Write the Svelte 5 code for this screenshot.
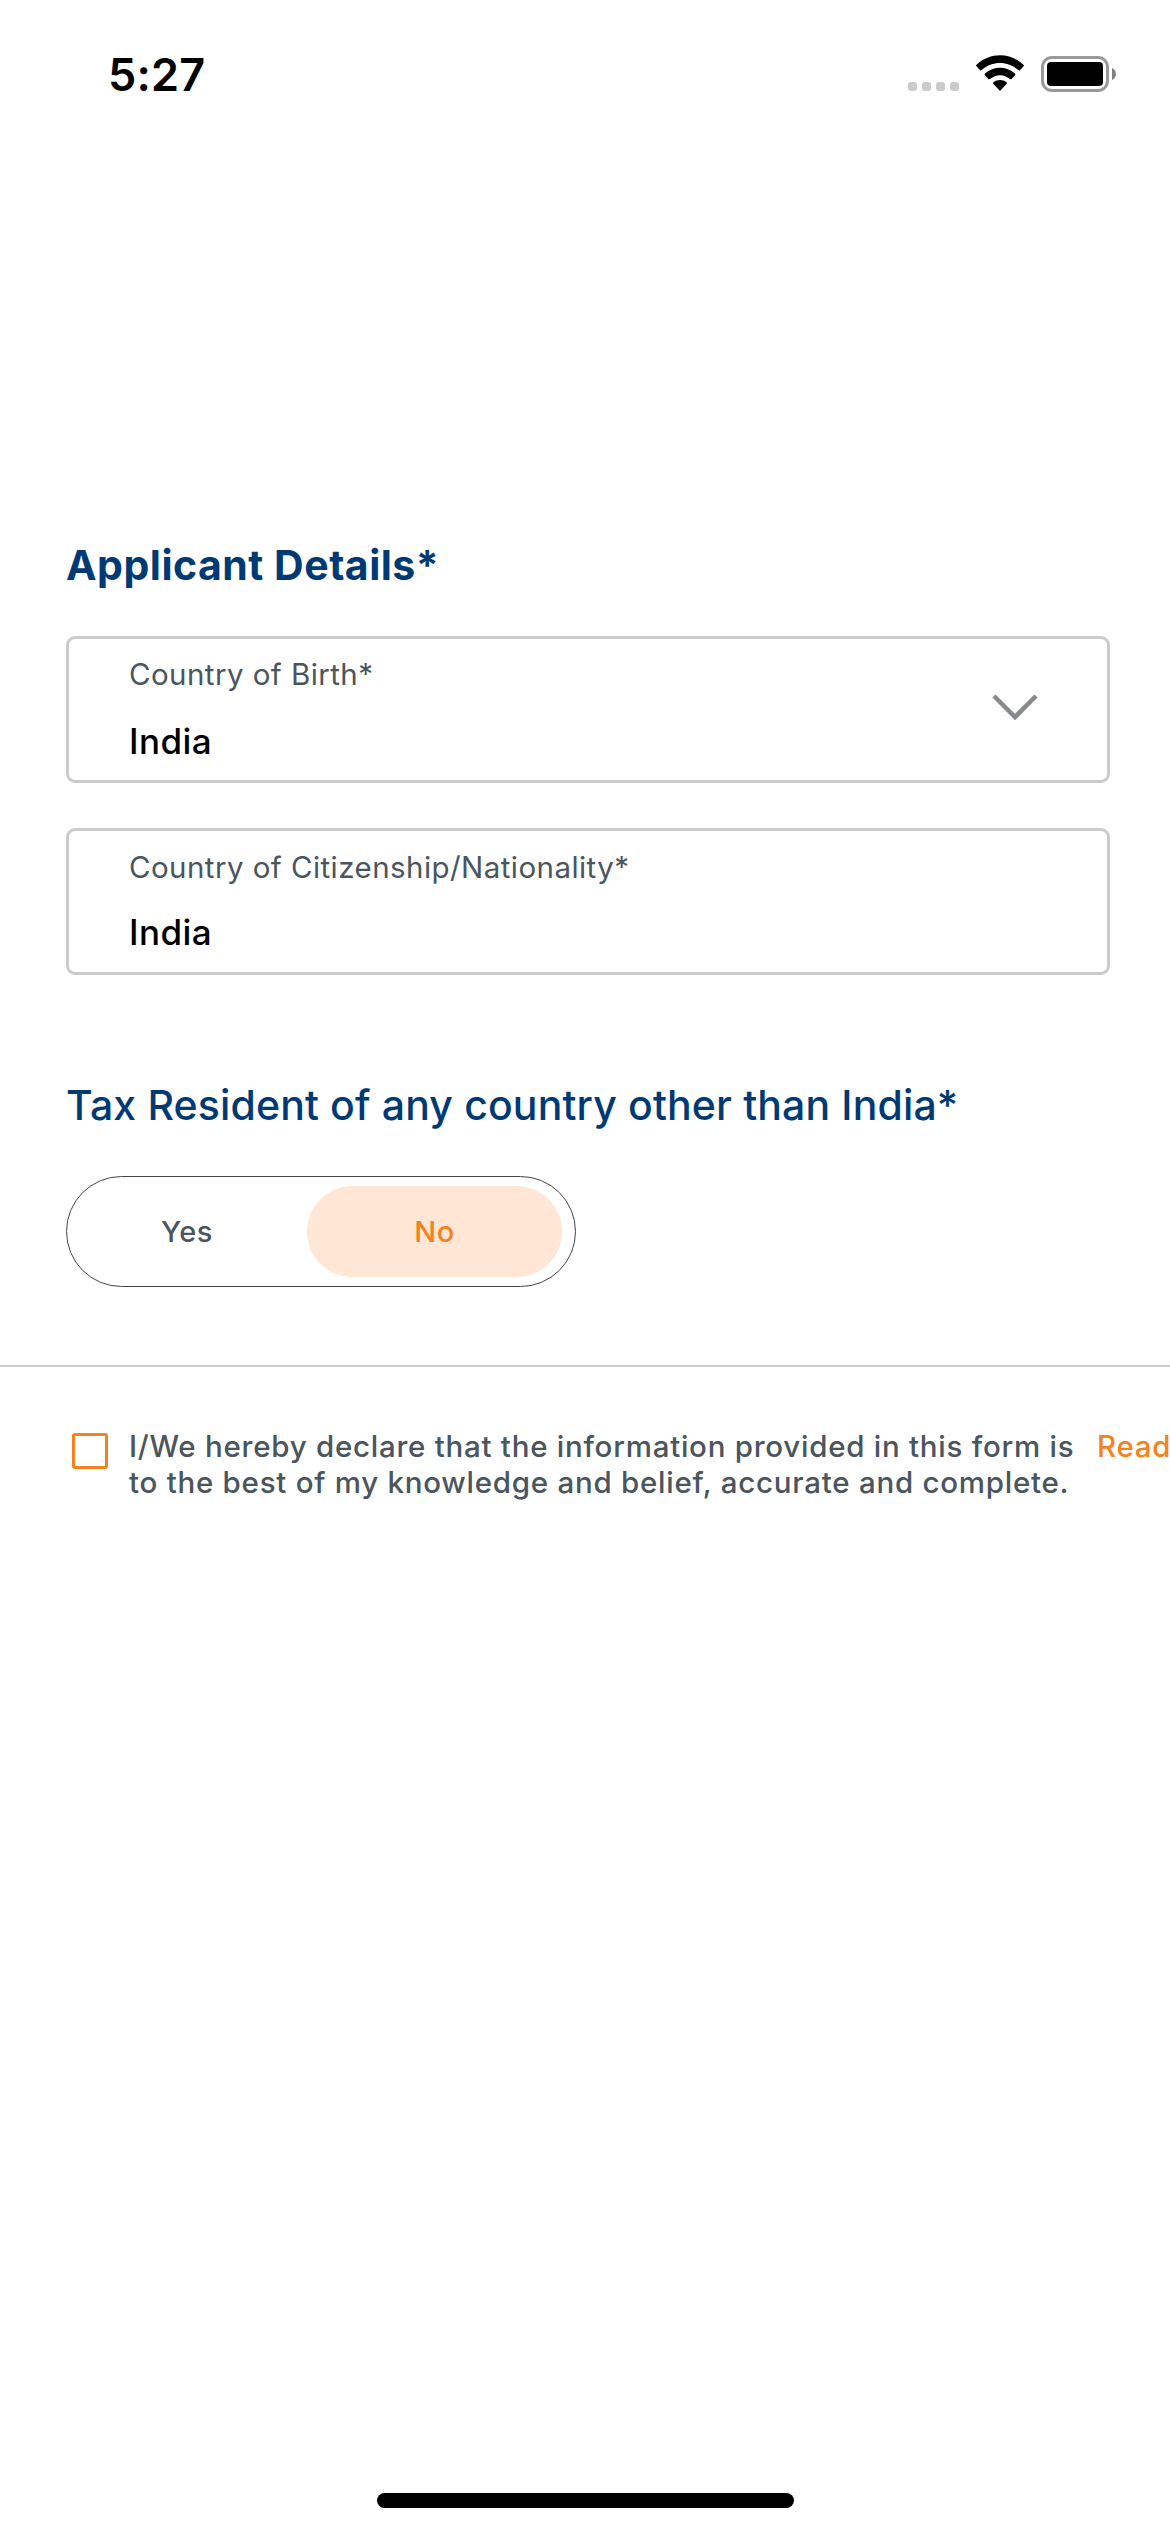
<script>
  const fields = [
    { id: 'birth', label: 'Country of Birth*', value: 'India', dropdown: true },
    { id: 'citizenship', label: 'Country of Citizenship/Nationality*', value: 'India', dropdown: false }
  ];
  const options = ['Yes', 'No'];
  let selected = $state('No');
  let agreed = $state(false);
</script>

<div class="screen">
  <header class="status">
    <span class="time">5:27</span>
    <div class="indicators">
      <svg class="cell" width="51" height="9" viewBox="0 0 51 9" fill="#cbcbcb">
        <rect width="9" height="9" rx="3" />
        <rect x="14" width="9" height="9" rx="3" />
        <rect x="28" width="9" height="9" rx="3" />
        <rect x="42" width="9" height="9" rx="3" />
      </svg>
      <svg class="wifi" width="48" height="36" viewBox="0 0 48 36">
        <path d="M.5 11.300Q-.3 10.500 .5 9.700C14-3 34-3 47.500 9.700Q48.300 10.500 47.500 11.300L44 15.200Q43.200 15.800 42.400 15.100C32 5.600 16 5.600 5.600 15.100Q4.800 15.800 4 15.200Z" />
        <path d="M8.900 20.200Q8.200 19.300 9 18.500C17.500 10.700 30.500 10.700 39 18.500Q39.800 19.300 39.100 20.200L35.600 24Q34.800 24.700 33.900 24C28 18.900 20 18.900 14.100 24Q13.200 24.700 12.400 24Z" />
        <path d="M17.300 28.800Q16.700 28 17.500 27.300C21.300 24.300 26.700 24.300 30.500 27.300Q31.300 28 30.700 28.800L24.700 35.200Q24 36 23.300 35.200Z" />
      </svg>
      <svg class="battery" width="75" height="36" viewBox="0 0 75 36">
        <rect x="1.500" y="1.500" width="65" height="33" rx="9.500" fill="none" stroke="#999" stroke-width="3" />
        <rect x="6" y="6" width="56" height="24" rx="4" />
        <path d="M71 12C76.200 14 76.200 22 71 24Z" fill="#808080" />
      </svg>
    </div>
  </header>

  <main>
    <h1>Applicant Details*</h1>
    {#each fields as field (field.id)}
      <div class="field {field.id}">
        <div>
          <div class="label">{field.label}</div>
          <div class="value">{field.value}</div>
        </div>
        {#if field.dropdown}
          <svg class="chevron" width="46" height="28" viewBox="0 0 46 28">
            <path d="M2 3L23 24L44 3" fill="none" stroke="#868a8c" stroke-width="4.500" />
          </svg>
        {/if}
      </div>
    {/each}

    <h2>Tax Resident of any country other than India*</h2>
    <div class="toggle">
      {#each options as option}
        <button class:active={selected === option} onclick={() => (selected = option)}>{option}</button>
      {/each}
    </div>
  </main>

  <section class="declaration">
    <button class="check" class:agreed aria-label="Accept declaration" onclick={() => (agreed = !agreed)}></button>
    <p>
      I/We hereby declare that the information provided in this form is<br />
      to the best of my knowledge and belief, accurate and complete.
    </p>
    <span class="read">Read</span>
  </section>

  <div class="home"></div>
</div>

<style>
  :global(body) { background: #fff; }
  .screen {
    width: 1170px;
    height: 2532px;
    overflow: hidden;
    display: flex;
    flex-direction: column;
    background: #fff;
    color: #000;
    font-family: Inter, "Liberation Sans", sans-serif;
  }
  .status {
    height: 540px;
    flex: none;
    box-sizing: border-box;
    padding: 48px 54px 0 108px;
    display: flex;
    justify-content: space-between;
    align-items: flex-start;
  }
  .time { font-size: 45px; line-height: 54px; font-weight: 600; letter-spacing: 0.2px; }
  .indicators { display: flex; align-items: flex-start; padding-top: 7px; }
  .cell { margin: 27px 17px 0 0; }
  .wifi { margin-right: 17px; }
  .battery { margin-top: 1px; }
  main { padding: 0 60px 0 66px; }
  h1, h2 { margin: 0; font-size: 41px; line-height: 50px; color: #003a75; white-space: nowrap; }
  h1 { font-weight: 700; margin-bottom: 46px; letter-spacing: 0.5px; }
  h2 { font-weight: 500; margin: 105px 0 46px; letter-spacing: 0.14px; }
  .field {
    box-sizing: border-box;
    height: 147px;
    border: 3px solid #ccc;
    border-radius: 9px;
    padding: 17px 69px 0 60px;
    display: flex;
    justify-content: space-between;
    align-items: flex-start;
  }
  .field + .field { margin-top: 45px; padding-top: 18px; }
  .label { font-size: 29.5px; line-height: 36px; color: #4a555e; letter-spacing: 0.44px; white-space: nowrap; }
  .value { margin-top: 27px; font-size: 35px; line-height: 44px; font-weight: 500; letter-spacing: 0.4px; }
  .citizenship .value { margin-top: 25px; }
  .chevron { margin-top: 37px; }
  button { font: inherit; background: none; border: 0; padding: 0; }
  .toggle {
    box-sizing: border-box;
    width: 510px;
    height: 111px;
    border: 1px solid #444;
    border-radius: 56px;
    padding: 9px 13px 9px 0;
    display: flex;
  }
  .toggle button {
    flex: 0 0 240px;
    border-radius: 46px;
    color: #4a555e;
    font-size: 29px;
    font-weight: 500;
    letter-spacing: 0.6px;
  }
  .toggle button.active { flex: 1; background: #ffe6d5; color: #f58220; }
  .declaration {
    margin-top: 78px;
    border-top: 2px solid #ccc;
    padding: 61px 0 0 72px;
    display: flex;
    font-size: 29.5px;
    line-height: 36px;
    font-weight: 500;
    letter-spacing: 0.74px;
    color: #4a555e;
    white-space: nowrap;
  }
  .check { box-sizing: border-box; flex: none; width: 36px; height: 36px; margin: 5px 21px 0 0; border: 3px solid #f58220; border-radius: 3px; }
  .check.agreed { background: #f58220; }
  p { margin: 0; flex: 0 0 968px; }
  .read { color: #f58220; }
  .home { margin: auto auto 24px; width: 417px; height: 15px; border-radius: 8px; background: #000; }
</style>
